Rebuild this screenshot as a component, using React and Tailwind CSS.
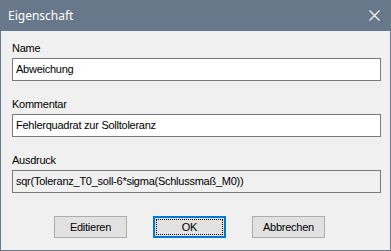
import React from "react";

const Field = ({ label, value, readOnly }) => (
    <div className="flex flex-col">
        <div className="h-[13px] text-[11px] leading-[13px] tracking-[-0.25px] text-black">{label}</div>
        <div
            className={`mt-[3px] flex h-[23px] w-[369px] items-center border border-[#7a7a7a] pl-[3px] text-[11px] tracking-[-0.25px] text-black ${
                readOnly ? "bg-[#f0f0f0]" : "bg-white"
            }`}
        >
            {value}
        </div>
    </div>
);

const Button = ({ children, focused }) => (
    <button
        className={`flex h-[22px] w-[73px] items-center justify-center bg-[#e1e1e1] text-[11px] tracking-[-0.25px] text-black ${
            focused ? "border-2 border-[#0078d7] p-[1px]" : "border border-[#adadad]"
        }`}
    >
        {focused ? (
            <span className="flex h-full w-full items-center justify-center border border-dotted border-black">
                {children}
            </span>
        ) : (
            children
        )}
    </button>
);

export default function App() {
    return (
        <div
            className="flex h-[251px] w-[391px] flex-col overflow-hidden bg-[#687789]"
            style={{ fontFamily: '"Liberation Sans", Arial, sans-serif' }}
        >
            {/* title bar */}
            <div className="flex h-[31px] shrink-0 items-center justify-between pl-[8px] pr-[10px]">
                <span
                    className="text-[12px] text-white"
                    style={{ fontFamily: '"Noto Sans", "Open Sans", sans-serif' }}
                >
                    Eigenschaft
                </span>
                <svg width="11" height="11" viewBox="0 0 11 11" className="mr-[1px]">
                    <path d="M0.5 0.5 L10.5 10.5 M10.5 0.5 L0.5 10.5" stroke="white" strokeWidth="1.1" />
                </svg>
            </div>

            {/* body */}
            <div className="mx-[1px] mb-[1px] flex flex-1 flex-col bg-[#f0f0f0] pl-[11px] pt-[11px]">
                <div className="flex flex-col gap-[17px]">
                    <Field label="Name" value="Abweichung" />
                    <Field label="Kommentar" value="Fehlerquadrat zur Solltoleranz" />
                    <Field label="Ausdruck" value="sqr(Toleranz_T0_soll-6*sigma(Schlussmaß_M0))" readOnly />
                </div>
                <div className="mt-[23px] flex gap-[26px] pl-[42px]">
                    <Button>Editieren</Button>
                    <Button focused>OK</Button>
                    <Button>Abbrechen</Button>
                </div>
            </div>
        </div>
    );
}
